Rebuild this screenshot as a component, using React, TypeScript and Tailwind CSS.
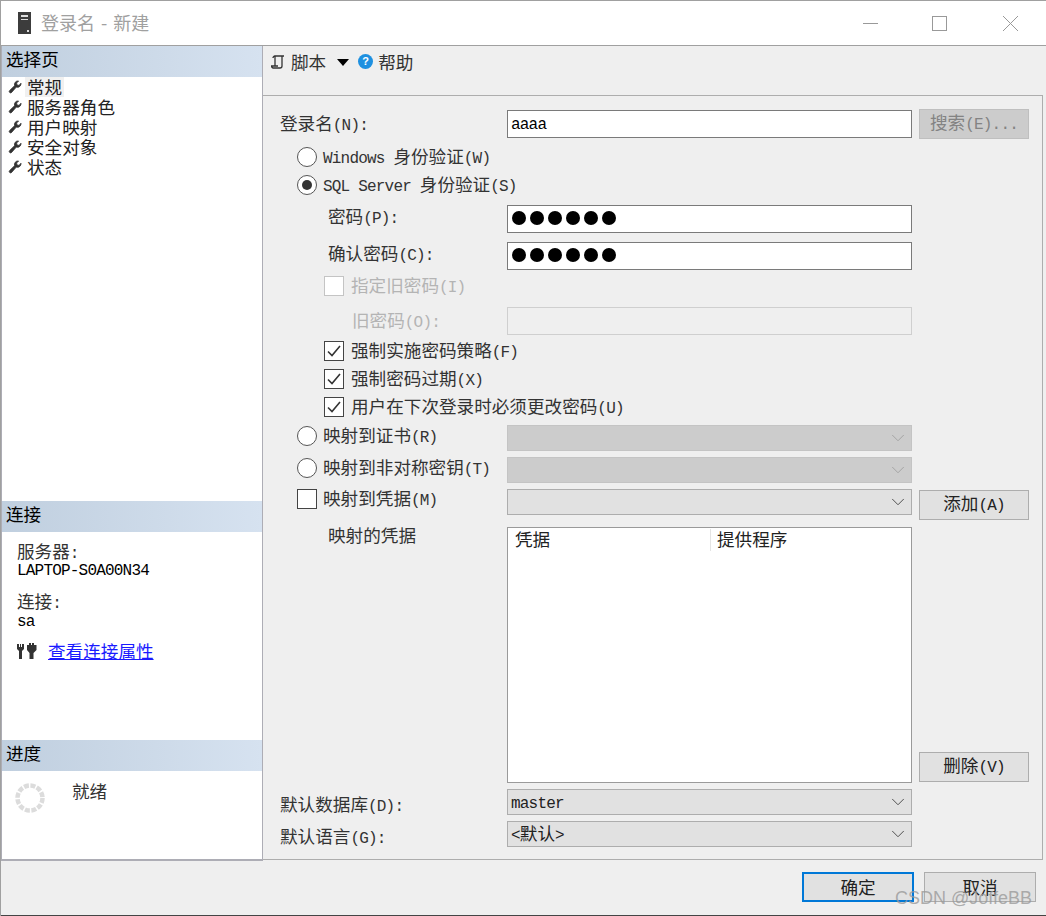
import { ReactNode } from 'react';
import { ChevronDown } from 'lucide-react';

// SimSun-like text: latin runs are half the width of a CJK glyph
function T({ children }: { children: string }) {
  const parts = children.split(/([\x00-\x7f]+)/).filter(Boolean);
  return (
    <span className="whitespace-pre">
      {parts.map((p, i) =>
        /^[\x00-\x7f]/.test(p)
          ? <span key={i} className="font-['Liberation_Mono',monospace] text-[16px] tracking-[-0.8px]">{p}</span>
          : <span key={i}>{p}</span>
      )}
    </span>
  );
}

function Wrench() {
  return (
    <svg width="14" height="14" viewBox="0 0 14 14" className="shrink-0">
      <path d="M13 3.2a3.6 3.6 0 0 1-4.700 3.900L3.600 12.400a1.300 1.300 0 0 1-2-1.800l5-4.900A3.600 3.600 0 0 1 10.600 1L8.600 3l.4 2 2 .4z" fill="#333" stroke="#333" strokeWidth="0.8" />
    </svg>
  );
}

function SectionHead({ children }: { children: string }) {
  return (
    <div className="h-[31px] pl-[4px] pb-[6px] flex items-center text-black bg-gradient-to-r from-[#c0cfdf] to-[#d6e2f0]">
      <T>{children}</T>
    </div>
  );
}

function Input({ value, dots }: { value?: string; dots?: boolean }) {
  return (
    <div className="w-[405px] h-[28px] bg-white border border-[#7a7a7a] flex items-center pl-[3px] pb-[2px] text-black">
      {value && <T>{value}</T>}
      {dots && (
        <div className="flex gap-[4px] ml-px">
          {[0, 1, 2, 3, 4, 5].map(i => <span key={i} className="w-[14px] h-[14px] rounded-full bg-black" />)}
        </div>
      )}
    </div>
  );
}

function Combo({ value, disabled }: { value?: string; disabled?: boolean }) {
  return (
    <div className={`w-[405px] h-[26px] border flex items-center pl-[3px] pr-[2px] justify-between ${disabled ? 'bg-[#cccccc] border-[#c4c4c4]' : 'bg-[#e1e1e1] border-[#adadad]'}`}>
      <span className="text-[#222]">{value && <T>{value}</T>}</span>
      <ChevronDown size={22} strokeWidth={1} className={disabled ? 'text-[#a0a0a0]' : 'text-[#444]'} />
    </div>
  );
}

function Btn({ children, disabled }: { children: string; disabled?: boolean }) {
  return (
    <div className={`w-[110px] h-[30px] border pb-[2px] flex items-center justify-center ${disabled ? 'bg-[#cccccc] border-[#bfbfbf] text-[#838383]' : 'bg-[#e1e1e1] border-[#adadad] text-[#222]'}`}>
      <T>{children}</T>
    </div>
  );
}

function Radio({ checked }: { checked?: boolean }) {
  return (
    <span className="w-[20px] h-[20px] rounded-full bg-white border border-[#555] flex items-center justify-center shrink-0">
      {checked && <span className="w-[10px] h-[10px] rounded-full bg-[#333]" />}
    </span>
  );
}

function Check({ checked, disabled }: { checked?: boolean; disabled?: boolean }) {
  return (
    <span className={`w-[20px] h-[20px] bg-white border flex items-center justify-center shrink-0 ${disabled ? 'border-[#c4c4c4]' : 'border-[#444]'}`}>
      {checked && (
        <svg width="14" height="12" viewBox="0 0 14 12">
          <path d="M1 6.500l4 4L13 1" fill="none" stroke="#333" strokeWidth="1.600" />
        </svg>
      )}
    </span>
  );
}

function Row({ h, mt, pl = 0, children }: { h: number; mt: string; pl?: number; children: ReactNode }) {
  return (
    <div className={`flex items-center ${mt}`} style={{ height: h, paddingLeft: pl }}>
      {children}
    </div>
  );
}

function Label({ w, className = '', children }: { w: string; className?: string; children: string }) {
  return <div className={`shrink-0 ${w} ${className}`}><T>{children}</T></div>;
}

function OptionCheck({ mt, label }: { mt: string; label: string }) {
  return (
    <Row h={22} mt={mt} pl={44}>
      <Check checked />
      <span className="ml-[7px]"><T>{label}</T></span>
    </Row>
  );
}

const pages = ['常规', '服务器角色', '用户映射', '安全对象', '状态'];

export default function App() {
  return (
    <div className="w-[1046px] h-[916px] flex flex-col overflow-hidden relative bg-[#efefef] text-[#333] text-[17.6px] leading-[20px] font-['Noto_Sans_CJK_SC',sans-serif] border-t border-l border-[#a0a0a0]">
      <div className="h-[45px] shrink-0 bg-white border-b border-[#a0a0a0] flex items-center pl-[17px]">
        <svg width="13" height="22" viewBox="0 0 13 22">
          <rect width="13" height="22" fill="#3c3c3c" />
          <rect x="3" y="3" width="7" height="2" fill="#ddd" />
          <rect x="3" y="7" width="7" height="1" fill="#ddd" />
          <rect x="9" y="18" width="2" height="2" fill="#ddd" />
        </svg>
        <span className="ml-[10px] pb-[3px] text-[#a0a0a0] text-[18px] [word-spacing:2px]">登录名 - 新建</span>
        <div className="ml-auto flex items-center">
          <div className="w-[15px] h-px bg-[#999] mr-[54px]" />
          <div className="w-[15px] h-[15px] border border-[#999] mr-[56px]" />
          <svg width="15" height="15" viewBox="0 0 15 15" className="mr-[28px]">
            <path d="M0 0l15 15M15 0L0 15" stroke="#999" strokeWidth="1" />
          </svg>
        </div>
      </div>

      <div className="flex-1 flex min-h-0">
        <aside className="w-[262px] h-[815px] shrink-0 bg-white border-l border-r border-b-[2px] border-[#adadb5] flex flex-col">
          <SectionHead>选择页</SectionHead>
          <div className="h-[424px] text-[#222]">
            {pages.map((p, i) => (
              <div key={p} className="flex items-center h-[20px] pl-[6px]">
                <Wrench />
                <span className={`ml-[3px] px-[2px] ${i === 0 ? 'bg-[#f0f0f0]' : ''}`}><T>{p}</T></span>
              </div>
            ))}
          </div>
          <SectionHead>连接</SectionHead>
          <div className="h-[208px] pl-[15px] pt-[9px]">
            <div><T>服务器:</T></div>
            <div className="text-black -mt-[6px]"><T>LAPTOP-S0A00N34</T></div>
            <div className="mt-[10px]"><T>连接:</T></div>
            <div className="text-black -mt-[5px]"><T>sa</T></div>
            <div className="flex items-center mt-[9px] -ml-[1px]">
              <svg width="22" height="17" viewBox="0 0 22 17">
                <path d="M1 1v5l2 2v8h3V8l2-2V1H6v3H5V1H4v3H3V1zM11 2h2V0h2v2h1V0h2v2h2.500v5l-3 3v6h-4v-6l-2.500-3z" fill="#333" />
              </svg>
              <span className="ml-[10px] text-[#1a1aff] underline"><T>查看连接属性</T></span>
            </div>
          </div>
          <SectionHead>进度</SectionHead>
          <div className="flex-1 flex items-start pl-[13px] pt-[12px]">
            <svg width="30" height="30" viewBox="0 0 30 30" className="shrink-0">
              <circle cx="15" cy="15" r="12.500" fill="none" stroke="#dcdcdc" strokeWidth="4.500" strokeDasharray="5 1.550" />
            </svg>
            <span className="ml-[27px] mt-[-2px]"><T>就绪</T></span>
          </div>
        </aside>

        <main className="flex-1 min-w-0 flex flex-col">
          <div className="h-[49px] shrink-0 flex items-start pt-[6px] pl-[8px]">
            <svg width="14" height="16" viewBox="0 0 14 16" className="mt-[2px]">
              <path d="M4 12V2h9M4 2a2 2 0 0 0-2 2M11 2v10a2 2 0 0 1-2 2H2a2 2 0 0 1-1.500-2H7" fill="none" stroke="#333" strokeWidth="1.300" />
            </svg>
            <span className="ml-[6px]"><T>脚本</T></span>
            <span className="ml-[11px] mt-[7px] w-0 h-0 border-x-[6px] border-x-transparent border-t-[7px] border-t-black" />
            <span className="ml-[9px] mt-[2px] w-[15px] h-[15px] rounded-full bg-[#1e90e0] text-white text-[11px] leading-[15px] font-bold text-center font-['Liberation_Sans',sans-serif]">?</span>
            <span className="ml-[5px]"><T>帮助</T></span>
          </div>

          <div className="h-[765px] shrink-0 mr-[3px] border-t border-r border-b border-[#adadad] pl-[17px] pt-[13px]">
            <Row h={30} mt="">
              <Label w="w-[227px]">登录名(N):</Label>
              <Input value="aaaa" />
              <div className="ml-[7px]"><Btn disabled>搜索(E)...</Btn></div>
            </Row>
            <Row h={22} mt="mt-[7px]" pl={17}>
              <Radio />
              <span className="ml-[6px]"><T>Windows 身份验证(W)</T></span>
            </Row>
            <Row h={22} mt="mt-[6px]" pl={17}>
              <Radio checked />
              <span className="ml-[6px]"><T>SQL Server 身份验证(S)</T></span>
            </Row>
            <Row h={28} mt="mt-[9px]">
              <Label w="w-[227px]" className="pl-[48px] pb-[4px]">密码(P):</Label>
              <Input dots />
            </Row>
            <Row h={28} mt="mt-[9px]">
              <Label w="w-[227px]" className="pl-[48px] pb-[4px]">确认密码(C):</Label>
              <Input dots />
            </Row>
            <Row h={22} mt="mt-[5px]" pl={44}>
              <Check disabled />
              <span className="ml-[7px] text-[#b4b4b4]"><T>指定旧密码(I)</T></span>
            </Row>
            <Row h={28} mt="mt-[10px]">
              <Label w="w-[227px]" className="pl-[72px] text-[#b4b4b4]">旧密码(O):</Label>
              <div className="w-[405px] h-[28px] bg-[#efefef] border border-[#cfcfcf]" />
            </Row>
            <OptionCheck mt="mt-[5px]" label="强制实施密码策略(F)" />
            <OptionCheck mt="mt-[6px]" label="强制密码过期(X)" />
            <OptionCheck mt="mt-[6px]" label="用户在下次登录时必须更改密码(U)" />
            <Row h={26} mt="mt-[7px]" pl={17}>
              <div className="w-[210px] pb-[4px] flex items-center">
                <Radio />
                <span className="ml-[6px]"><T>映射到证书(R)</T></span>
              </div>
              <Combo disabled />
            </Row>
            <Row h={26} mt="mt-[6px]" pl={17}>
              <div className="w-[210px] pb-[4px] flex items-center">
                <Radio />
                <span className="ml-[6px]"><T>映射到非对称密钥(T)</T></span>
              </div>
              <Combo disabled />
            </Row>
            <div className="flex items-start h-[31px] mt-[6px] pl-[17px]">
              <div className="w-[210px] h-[20px] flex items-center">
                <Check />
                <span className="ml-[6px]"><T>映射到凭据(M)</T></span>
              </div>
              <Combo />
              <div className="ml-[7px] mt-[1px]"><Btn>添加(A)</Btn></div>
            </div>
            <div className="flex h-[256px] mt-[7px]">
              <Label w="w-[227px]" className="pl-[48px] -mt-[2px]">映射的凭据</Label>
              <div className="w-[405px] bg-white border border-[#9a9a9a] text-[#222]">
                <div className="flex h-[24px] items-center">
                  <div className="w-[203px] pl-[7px] border-r border-[#e4e4e4] h-[22px]"><T>凭据</T></div>
                  <div className="pl-[6px] h-[22px]"><T>提供程序</T></div>
                </div>
              </div>
              <div className="ml-[7px] flex flex-col justify-end pb-px"><Btn>删除(V)</Btn></div>
            </div>
            <Row h={26} mt="mt-[6px]">
              <Label w="w-[227px]" className="pt-[6px]">默认数据库(D):</Label>
              <Combo value="master" />
            </Row>
            <Row h={26} mt="mt-[6px]">
              <Label w="w-[227px]" className="pt-[6px]">默认语言(G):</Label>
              <Combo value="<默认>" />
            </Row>
          </div>

          <div className="flex-1 flex justify-end items-start pt-[12px] pr-[10px] gap-[10px] text-[#222]">
            <div className="w-[112px] h-[30px] bg-[#e1e1e1] border-[2px] border-[#0078d7] flex items-center justify-center"><T>确定</T></div>
            <div className="w-[112px] h-[30px] bg-[#e1e1e1] border border-[#adadad] flex items-center justify-center"><T>取消</T></div>
          </div>
        </main>
      </div>

      <span className="absolute right-[14px] bottom-[8px] text-[18px] leading-[20px] text-[#9a9a9a]/80 font-['Liberation_Sans',sans-serif]">CSDN @JoffeBB</span>
      <div className="absolute bottom-0 left-0 right-0 h-px bg-[#444]" />
    </div>
  );
}
